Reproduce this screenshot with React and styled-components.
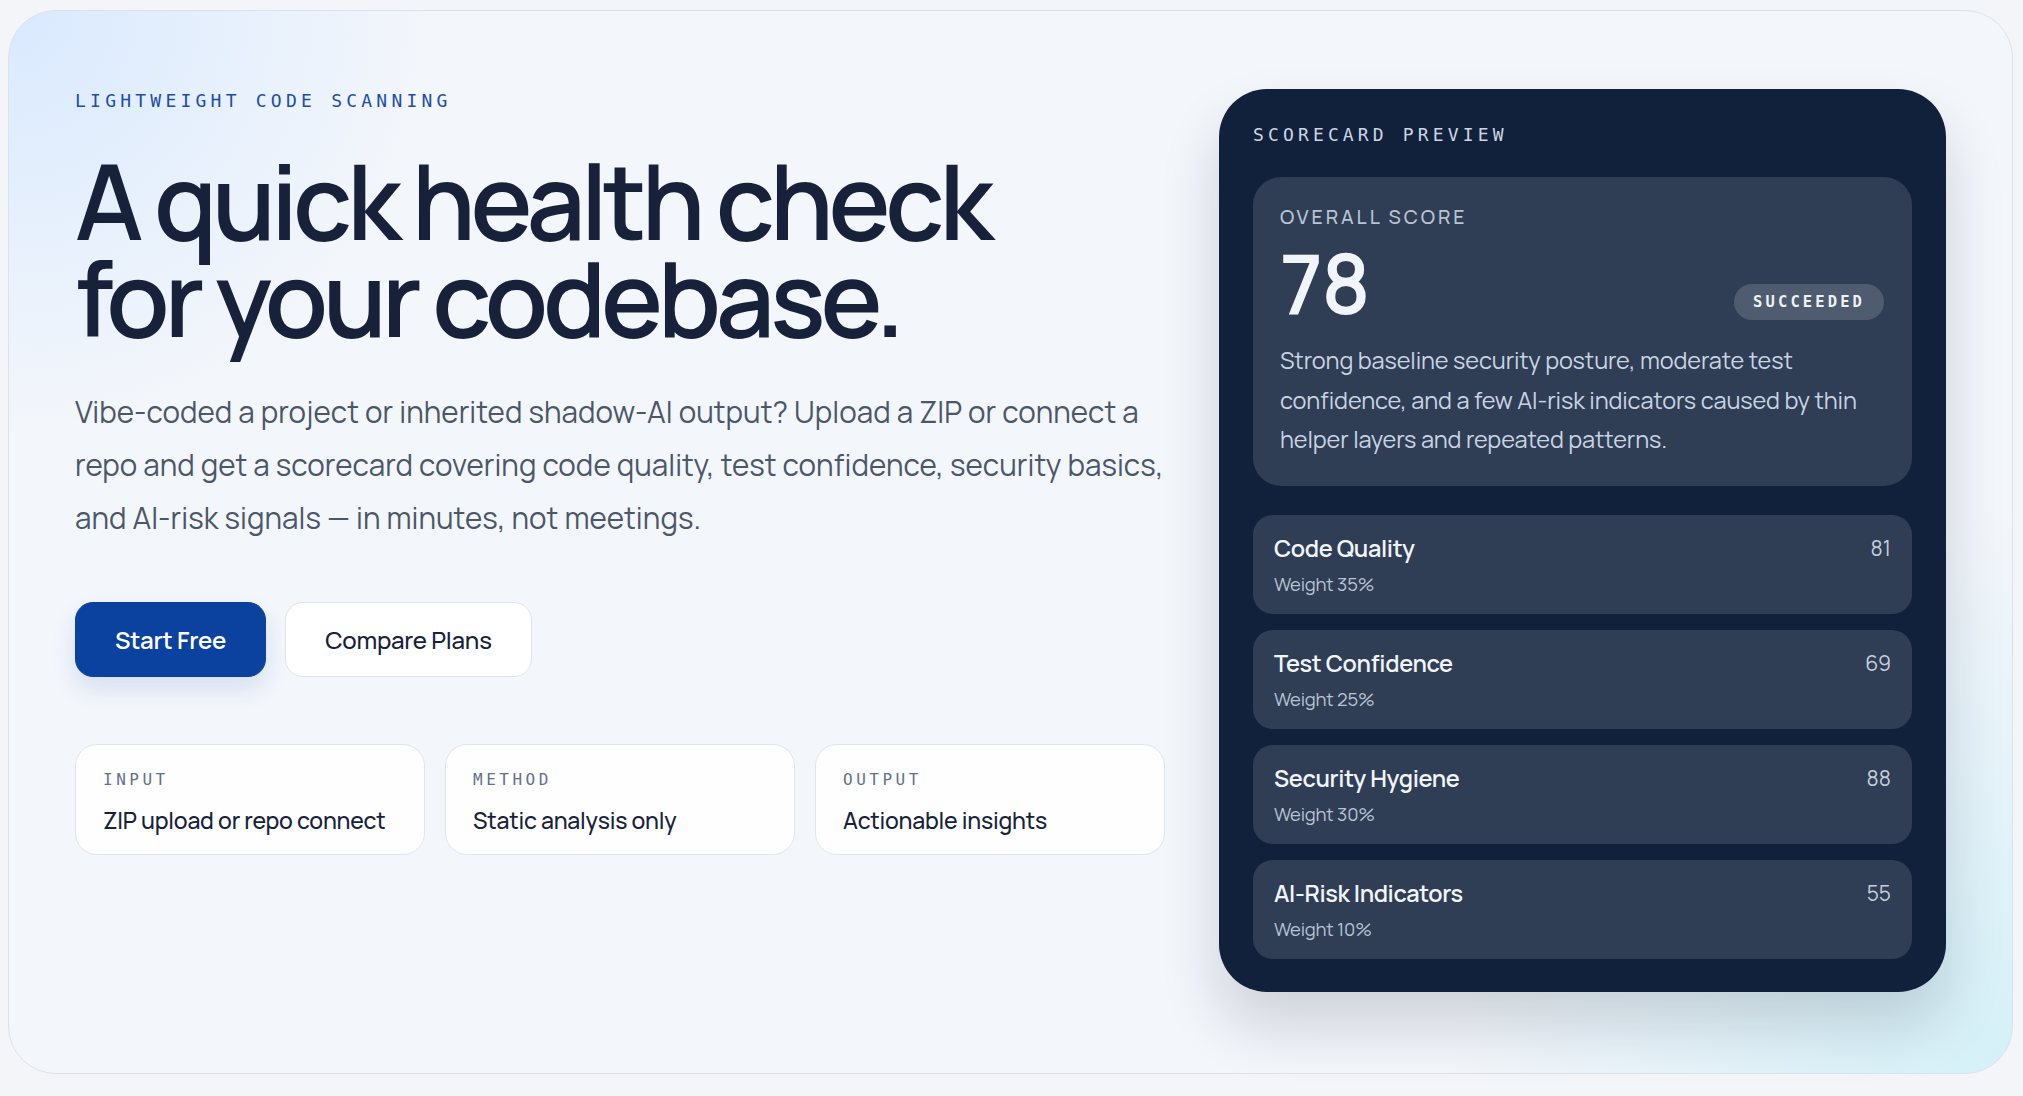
import React from "react";
import styled, { createGlobalStyle } from "styled-components";

const GlobalStyle = createGlobalStyle`
  * { box-sizing: border-box; }
  html, body { margin: 0; padding: 0; background: #f3f5f9; }
  body {
    font-family: "Manrope", "Inter", "Noto Sans", sans-serif;
    -webkit-font-smoothing: antialiased;
  }
`;

const mono = `"DejaVu Sans Mono", "Liberation Mono", monospace`;

const scores = [
  { name: "Code Quality", weight: "35%", value: 81 },
  { name: "Test Confidence", weight: "25%", value: 69 },
  { name: "Security Hygiene", weight: "30%", value: 88 },
  { name: "AI-Risk Indicators", weight: "10%", value: 55 },
];

const facts = [
  { label: "INPUT", value: "ZIP upload or repo connect" },
  { label: "METHOD", value: "Static analysis only" },
  { label: "OUTPUT", value: "Actionable insights" },
];

export default function App() {
  return (
    <Page>
      <GlobalStyle />
      <Hero>
        <Intro>
          <Eyebrow>LIGHTWEIGHT CODE SCANNING</Eyebrow>
          <Title>
            A quick health check
            <br />
            for your codebase.
          </Title>
          <Lead>
            Vibe-coded a project or inherited shadow-AI output? Upload a ZIP or
            connect a<br />
            repo and get a scorecard covering code quality, test confidence,
            security basics,
            <br />
            and AI-risk signals — in minutes, not meetings.
          </Lead>
          <Actions>
            <Button $primary>Start Free</Button>
            <Button>Compare Plans</Button>
          </Actions>
          <Facts>
            {facts.map((f) => (
              <Fact key={f.label}>
                <FactLabel>{f.label}</FactLabel>
                <FactValue>{f.value}</FactValue>
              </Fact>
            ))}
          </Facts>
        </Intro>

        <Scorecard>
          <CardLabel>SCORECARD PREVIEW</CardLabel>
          <Overall>
            <OverallLabel>OVERALL SCORE</OverallLabel>
            <ScoreLine>
              <BigScore>78</BigScore>
              <Pill>SUCCEEDED</Pill>
            </ScoreLine>
            <Summary>
              Strong baseline security posture, moderate test
              <br />
              confidence, and a few AI-risk indicators caused by thin
              <br />
              helper layers and repeated patterns.
            </Summary>
          </Overall>
          <Rows>
            {scores.map((s) => (
              <Row key={s.name}>
                <RowText>
                  <RowName>{s.name}</RowName>
                  <RowWeight>Weight {s.weight}</RowWeight>
                </RowText>
                <RowValue>{s.value}</RowValue>
              </Row>
            ))}
          </Rows>
        </Scorecard>
      </Hero>
    </Page>
  );
}

const Page = styled.div`
  padding: 10px 10px 21px 8px;
`;

const Hero = styled.section`
  display: grid;
  grid-template-columns: 1fr 727px;
  gap: 54px;
  align-items: start;
  padding: 78px 66px 81px;
  border: 1px solid #dce2eb;
  border-radius: 48px;
  background:
    radial-gradient(circle at 0% 0%, rgba(214, 232, 255, 0.9) 0, rgba(214, 232, 255, 0) 420px),
    radial-gradient(circle at 100% 100%, rgba(212, 240, 248, 1) 0, rgba(212, 240, 248, 0) 560px),
    #f3f6fb;
`;

const Intro = styled.div`
  display: flex;
  flex-direction: column;
  align-items: flex-start;
`;

const Eyebrow = styled.div`
  font-family: ${mono};
  font-size: 18px;
  line-height: 24px;
  letter-spacing: 0.235em;
  color: #1c4ea6;
`;

const Title = styled.h1`
  margin: 39px 0 0;
  font-size: 104px;
  line-height: 97px;
  font-weight: 600;
  letter-spacing: -0.05em;
  color: #17223a;
`;

const Lead = styled.p`
  margin: 40px 0 0;
  font-size: 29.5px;
  line-height: 53px;
  letter-spacing: 0.002em;
  white-space: nowrap;
  color: #4b5668;
`;

const Actions = styled.div`
  display: flex;
  gap: 19px;
  margin-top: 57px;
`;

const Button = styled.button`
  height: 75px;
  padding: 0 39px;
  border-radius: 18px;
  font-family: inherit;
  font-size: 24px;
  font-weight: ${(p) => (p.$primary ? 600 : 500)};
  letter-spacing: -0.01em;
  cursor: pointer;
  border: 1px solid ${(p) => (p.$primary ? "#0b429f" : "#dfe4ec")};
  background: ${(p) => (p.$primary ? "#0b429f" : "#ffffff")};
  color: ${(p) => (p.$primary ? "#ffffff" : "#17223a")};
  box-shadow: ${(p) =>
    p.$primary ? "0 12px 24px rgba(11, 66, 159, 0.12)" : "none"};
`;

const Facts = styled.div`
  align-self: stretch;
  display: grid;
  grid-template-columns: repeat(3, 1fr);
  gap: 20px;
  margin-top: 67px;
`;

const Fact = styled.div`
  height: 111px;
  padding: 25px 27px 0;
  border: 1px solid #e0e5ed;
  border-radius: 22px;
  background: rgba(255, 255, 255, 0.85);
`;

const FactLabel = styled.div`
  font-family: ${mono};
  font-size: 16px;
  line-height: 20px;
  letter-spacing: 0.22em;
  color: #64708a;
`;

const FactValue = styled.div`
  margin-top: 14px;
  font-size: 23px;
  line-height: 32px;
  font-weight: 500;
  letter-spacing: -0.01em;
  white-space: nowrap;
  color: #17223a;
`;

const Scorecard = styled.aside`
  padding: 34px 34px 33px;
  border-radius: 48px;
  background: #12213b;
  box-shadow: 0 34px 60px rgba(15, 23, 42, 0.16);
`;

const CardLabel = styled.div`
  font-family: ${mono};
  font-size: 18px;
  line-height: 24px;
  letter-spacing: 0.23em;
  color: #cbd6e4;
`;

const Overall = styled.div`
  margin-top: 30px;
  padding: 28px 28px 26px 27px;
  border-radius: 28px;
  background: #2f3d55;
`;

const OverallLabel = styled.div`
  font-size: 19.5px;
  line-height: 24px;
  font-weight: 500;
  letter-spacing: 0.15em;
  color: #b8c4d3;
`;

const ScoreLine = styled.div`
  display: flex;
  justify-content: space-between;
  align-items: flex-end;
  margin-top: 13px;
`;

const BigScore = styled.div`
  font-size: 82px;
  line-height: 82px;
  font-weight: 600;
  letter-spacing: -0.02em;
  color: #f1f5f9;
`;

const Pill = styled.span`
  margin-bottom: 4px;
  padding: 0 19px;
  height: 36px;
  display: inline-flex;
  align-items: center;
  border-radius: 18px;
  background: #4f5b6e;
  font-family: ${mono};
  font-size: 15.5px;
  font-weight: 700;
  letter-spacing: 0.2em;
  color: #eef2f7;
`;

const Summary = styled.p`
  margin: 17px 0 0;
  font-size: 23.5px;
  line-height: 39.5px;
  letter-spacing: -0.005em;
  white-space: nowrap;
  color: #c9d4e2;
`;

const Rows = styled.div`
  display: flex;
  flex-direction: column;
  gap: 16px;
  margin-top: 29px;
`;

const Row = styled.div`
  display: flex;
  justify-content: space-between;
  align-items: flex-start;
  height: 99px;
  padding: 17px 21px 0 21px;
  border-radius: 20px;
  background: #2f3d55;
`;

const RowText = styled.div`
  display: flex;
  flex-direction: column;
  gap: 7px;
`;

const RowName = styled.div`
  font-size: 23.5px;
  line-height: 32px;
  font-weight: 600;
  letter-spacing: -0.015em;
  color: #f1f5f9;
`;

const RowWeight = styled.div`
  font-size: 18.5px;
  line-height: 26px;
  letter-spacing: -0.01em;
  color: #b8c4d3;
`;

const RowValue = styled.div`
  font-size: 21px;
  line-height: 32px;
  color: #c5cfdc;
`;
